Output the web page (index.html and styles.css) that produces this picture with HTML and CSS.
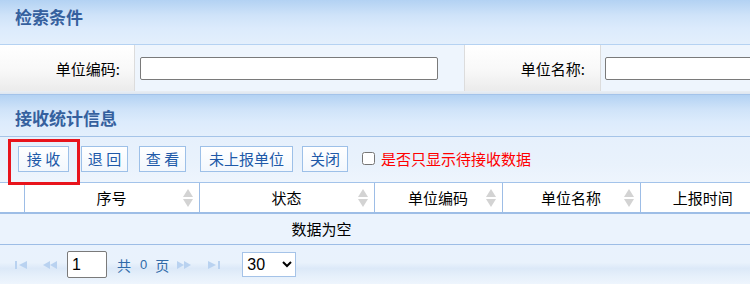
FILE: index.html
```html
<!DOCTYPE html>
<html lang="zh-CN">
<head>
    <meta charset="UTF-8">
    <meta name="viewport" content="width=device-width, initial-scale=1.0">
    <title>接收统计</title>
    <link rel="stylesheet" href="styles.css">
</head>
<body>
    <div class="panel search-panel">
        <div class="panel-header"><span class="panel-title">检索条件</span></div>
        <div class="search-row">
            <div class="search-label label-first">单位编码:</div>
            <div class="search-field field-first"><input type="text" class="text-input input-first"></div>
            <div class="search-label label-second">单位名称:</div>
            <div class="search-field field-second"><input type="text" class="text-input input-second"></div>
        </div>
        <div class="panel-foot"></div>
    </div>

    <div class="panel grid-panel">
        <div class="panel-header header-second"><span class="panel-title">接收统计信息</span></div>
        <div class="toolbar">
            <button class="tool-btn btn-receive">接 收</button>
            <button class="tool-btn btn-back">退 回</button>
            <button class="tool-btn btn-view">查 看</button>
            <button class="tool-btn btn-unreported">未上报单位</button>
            <button class="tool-btn btn-close">关闭</button>
            <label class="only-pending">
                <input type="checkbox" class="pending-check">
                <span>是否只显示待接收数据</span>
            </label>
            <div class="highlight-box"></div>
        </div>

        <div class="grid-wrap">
            <table class="grid">
                <colgroup>
                    <col class="col-rownum">
                    <col class="col-seq">
                    <col class="col-status">
                    <col class="col-code">
                    <col class="col-name">
                    <col class="col-time">
                </colgroup>
                <thead>
                    <tr>
                        <th></th>
                        <th class="th-seq">序号<span class="sort-icon"><svg width="10" height="18" viewBox="0 0 10 18"><path d="M5 0 L10 8 L0 8 Z" fill="#d3d3d3"/><path d="M0 10 L10 10 L5 18 Z" fill="#d3d3d3"/></svg></span></th>
                        <th class="th-status">状态<span class="sort-icon"><svg width="10" height="18" viewBox="0 0 10 18"><path d="M5 0 L10 8 L0 8 Z" fill="#d3d3d3"/><path d="M0 10 L10 10 L5 18 Z" fill="#d3d3d3"/></svg></span></th>
                        <th class="th-code">单位编码<span class="sort-icon"><svg width="10" height="18" viewBox="0 0 10 18"><path d="M5 0 L10 8 L0 8 Z" fill="#d3d3d3"/><path d="M0 10 L10 10 L5 18 Z" fill="#d3d3d3"/></svg></span></th>
                        <th class="th-name">单位名称<span class="sort-icon"><svg width="10" height="18" viewBox="0 0 10 18"><path d="M5 0 L10 8 L0 8 Z" fill="#d3d3d3"/><path d="M0 10 L10 10 L5 18 Z" fill="#d3d3d3"/></svg></span></th>
                        <th class="th-time">上报时间</th>
                    </tr>
                </thead>
            </table>
            <div class="empty-row">数据为空</div>
        </div>

        <div class="pager">
            <span class="pager-icon icon-first"><svg width="12" height="8" viewBox="0 0 12 8"><rect x="0" y="0" width="2" height="8" fill="#b9d2f0"/><path d="M12 0 L12 8 L4 4 Z" fill="#b9d2f0"/></svg></span>
            <span class="pager-icon icon-prev"><svg width="14" height="8" viewBox="0 0 14 8"><path d="M7 0 L7 8 L0 4 Z" fill="#b9d2f0"/><path d="M14 0 L14 8 L7 4 Z" fill="#b9d2f0"/></svg></span>
            <input type="text" class="page-input" value="1">
            <span class="pager-text">共</span>
            <span class="pager-text pager-num">0</span>
            <span class="pager-text pager-unit">页</span>
            <span class="pager-icon icon-next"><svg width="14" height="8" viewBox="0 0 14 8"><path d="M0 0 L0 8 L7 4 Z" fill="#b9d2f0"/><path d="M7 0 L7 8 L14 4 Z" fill="#b9d2f0"/></svg></span>
            <span class="pager-icon icon-last"><svg width="12" height="8" viewBox="0 0 12 8"><path d="M0 0 L0 8 L8 4 Z" fill="#b9d2f0"/><rect x="10" y="0" width="2" height="8" fill="#b9d2f0"/></svg></span>
            <select class="page-size">
                <option>30</option>
                <option>50</option>
                <option>100</option>
            </select>
        </div>
    </div>
</body>
</html>
```

FILE: styles.css
```css
body {
    margin: 0;
    font-family: "Noto Sans CJK SC", "Liberation Sans", sans-serif;
    font-size: 14px;
    color: #000;
    background-color: #fff;
    overflow: hidden;
}
.panel {
    width: 100%;
}
.panel-header {
    height: 45px;
    box-sizing: border-box;
    padding: 6px 0 0 15px;
    background: linear-gradient(to bottom, #b3d2f3 0%, #cfe3f9 35%, #dcebfc 65%, #e3effc 100%);
    border-bottom: 1px solid #b5d2f2;
}
.header-second {
    height: 43px;
    padding-top: 12px;
    border-top: 1px solid #a3c3ea;
    border-bottom: 1px solid #a5c4e8;
}
.panel-title {
    font-size: 17px;
    font-weight: bold;
    color: #35609e;
    line-height: 22px;
}
.search-row {
    display: flex;
    height: 46px;
    background-color: #eef5fd;
    overflow: hidden;
}
.search-label {
    display: flex;
    flex-shrink: 0;
    align-items: center;
    justify-content: flex-end;
    box-sizing: border-box;
    padding-right: 14px;
    font-size: 15px;
    background: linear-gradient(to bottom, #ffffff 0%, #f8f8f8 55%, #ebebeb 100%);
    border-right: 1px solid #dcdcdc;
}
.label-first {
    width: 135px;
}
.label-second {
    width: 137px;
    border-left: 1px solid #dcdcdc;
    padding-right: 15px;
}
.search-field {
    display: flex;
    flex-shrink: 0;
    align-items: center;
    box-sizing: border-box;
}
.field-first {
    width: 329px;
    padding-left: 5px;
}
.field-second {
    width: 300px;
    padding-left: 4px;
}
.text-input {
    height: 23px;
    box-sizing: border-box;
    border: 1px solid #7a7a7a;
    border-radius: 2px;
    background: #fff;
    margin: 0;
}
.input-first {
    width: 298px;
}
.input-second {
    width: 290px;
}
.panel-foot {
    height: 3px;
    background: linear-gradient(to bottom, #e9eef4, #dde6f0);
}
.toolbar {
    position: relative;
    display: flex;
    align-items: center;
    height: 45px;
    box-sizing: border-box;
    padding: 0 0 2px 18px;
    background: linear-gradient(to bottom, #e6f0fc 0%, #e9f2fc 60%, #eef5fd 100%);
}
.tool-btn {
    height: 26px;
    box-sizing: border-box;
    padding: 0;
    margin: 0;
    font-family: "Noto Sans CJK SC", sans-serif;
    font-size: 15px;
    line-height: 24px;
    color: #2059a8;
    background: linear-gradient(to bottom, #ffffff, #f2f7fd);
    border: 1px solid #9dc0e8;
    border-radius: 0;
    white-space: nowrap;
}
.btn-receive {
    width: 51px;
}
.btn-back {
    width: 47px;
    margin-left: 12px;
}
.btn-view {
    width: 47px;
    margin-left: 11px;
}
.btn-unreported {
    width: 93px;
    margin-left: 14px;
}
.btn-close {
    width: 46px;
    margin-left: 9px;
}
.only-pending {
    display: flex;
    align-items: center;
    margin-left: 14px;
    font-size: 15px;
    color: #ff0000;
}
.pending-check {
    width: 13px;
    height: 13px;
    margin: 0 6px 0 0;
}
.highlight-box {
    position: absolute;
    left: 8px;
    top: 2px;
    width: 72px;
    height: 46px;
    box-sizing: border-box;
    border: 3px solid #e8141c;
    z-index: 2;
}
.grid-wrap {
    overflow: hidden;
    background-color: #ebf3fd;
}
.grid {
    border-collapse: collapse;
    table-layout: fixed;
    width: 765px;
    background-color: #fff;
}
.col-rownum { width: 24px; }
.col-seq { width: 175px; }
.col-status { width: 175px; }
.col-code { width: 128px; }
.col-name { width: 138px; }
.col-time { width: 125px; }
.grid th {
    position: relative;
    height: 29px;
    padding: 0;
    font-weight: normal;
    font-size: 15px;
    text-align: center;
    border-top: 1px solid #a3c3ea;
    border-bottom: 2px solid #9dbde6;
    border-left: 1px solid #9dbde6;
}
.grid th:first-child {
    border-left: none;
}
.th-seq, .th-status {
    padding-left: 13px;
}
.th-code {
    padding-right: 12px;
}
.sort-icon {
    position: absolute;
    right: 6px;
    top: 6px;
    line-height: 0;
}
.empty-row {
    height: 30px;
    line-height: 30px;
    font-size: 15px;
    text-align: center;
    padding-right: 107px;
    border-bottom: 1px solid #9dbde6;
}
.pager {
    display: flex;
    align-items: center;
    height: 39px;
    padding-left: 15px;
    background: linear-gradient(to bottom, #e9f2fd 0%, #e9f2fc 45%, #dce9f8 60%, #e6f0fb 80%, #eef5fd 100%);
}
.pager-icon {
    line-height: 0;
}
.icon-prev {
    margin-left: 16px;
}
.page-input {
    width: 40px;
    height: 27px;
    box-sizing: border-box;
    margin: 0 0 0 10px;
    padding: 0 4px;
    font-family: "Liberation Sans", sans-serif;
    font-size: 16px;
    border: 1px solid #7a7a7a;
    border-radius: 2px;
}
.pager-text {
    color: #2f6aa8;
    font-size: 14px;
    margin-left: 10px;
}
.pager-num {
    font-family: "Liberation Sans", sans-serif;
    font-size: 13px;
    margin-left: 9px;
}
.pager-unit {
    margin-left: 8px;
}
.icon-next {
    margin-left: 8px;
}
.icon-last {
    margin-left: 17px;
}
.page-size {
    width: 54px;
    height: 25px;
    margin-left: 22px;
    font-family: "Liberation Sans", sans-serif;
    font-size: 16px;
    border: 1px solid #a5c3e8;
    border-radius: 0;
    background-color: #fff;
}
```
